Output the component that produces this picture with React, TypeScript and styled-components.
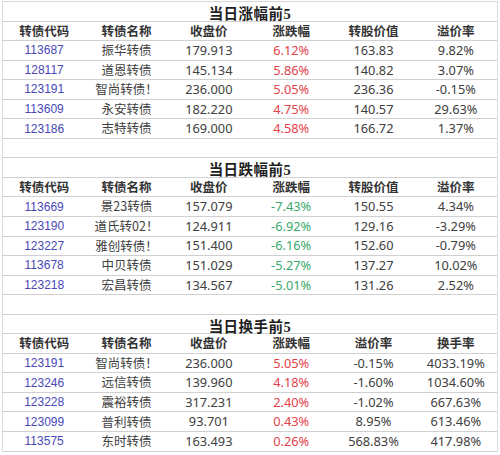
import React from 'react';
import styled, { createGlobalStyle } from 'styled-components';

const GlobalStyle = createGlobalStyle`
  html, body {
    margin: 0;
    padding: 0;
    background: #ffffff;
  }
`;

const Sheet = styled.div`
  width: 494px;
  margin: 1px 0 0 2px;
  border-top: 1px solid #d6d6d6;
  border-left: 1px solid #dcdcdc;
  border-right: 1px solid #dcdcdc;
  font-family: 'Noto Sans', 'Noto Sans CJK SC', sans-serif;
  color: #3a3a3a;
`;

const Row = styled.div`
  display: grid;
  grid-template-columns: repeat(6, 1fr);
  align-items: center;
  height: 19.55px;
  box-sizing: border-box;
  border-bottom: 1px solid #d0d0d0;
`;

const TitleRow = styled.div`
  height: 19.55px;
  box-sizing: border-box;
  border-bottom: 1px solid #d0d0d0;
  display: flex;
  align-items: center;
  justify-content: center;
  padding-top: 2px;
  font-family: 'Liberation Serif', 'Noto Sans CJK SC', serif;
  font-weight: 700;
  font-size: 14.5px;
  color: #1e1e1e;
  letter-spacing: 0.5px;
`;

const BlankRow = styled.div`
  height: 19.55px;
  box-sizing: border-box;
  border-bottom: 1px solid #d0d0d0;
`;

const HeadCell = styled.div`
  text-align: center;
  font-family: 'Noto Sans CJK SC', sans-serif;
  font-weight: 700;
  font-size: 12.5px;
  color: #333333;
  line-height: 1;
`;

type Tone = 'plain' | 'name' | 'code' | 'up' | 'down';

const toneColor: Record<Tone, string> = {
  plain: '#404040',
  name: '#404040',
  code: '#4848b8',
  up: '#e4424a',
  down: '#39a86c',
};

const toneFont: Record<Tone, string> = {
  plain: "'Noto Sans', 'Noto Sans CJK SC', sans-serif",
  name: "'Noto Sans CJK SC', sans-serif",
  code: "'Liberation Sans', sans-serif",
  up: "'Noto Sans', sans-serif",
  down: "'Noto Sans', sans-serif",
};

const Cell = styled.div<{ $tone: Tone }>`
  text-align: center;
  font-family: ${(p) => toneFont[p.$tone]};
  font-size: ${(p) => (p.$tone === 'code' ? '12px' : p.$tone === 'name' ? '12.5px' : '12.8px')};
  color: ${(p) => toneColor[p.$tone]};
  line-height: 1;
  white-space: nowrap;
`;

type Section = {
  title: string;
  headers: string[];
  tones: Tone[];
  rows: string[][];
};

const changeTone = (v: string): Tone => (v.startsWith('-') ? 'down' : 'up');

const sections: Section[] = [
  {
    title: '当日涨幅前5',
    headers: ['转债代码', '转债名称', '收盘价', '涨跌幅', '转股价值', '溢价率'],
    tones: ['code', 'name', 'plain', 'up', 'plain', 'plain'],
    rows: [
      ['113687', '振华转债', '179.913', '6.12%', '163.83', '9.82%'],
      ['128117', '道恩转债', '145.134', '5.86%', '140.82', '3.07%'],
      ['123191', '智尚转债！', '236.000', '5.05%', '236.36', '-0.15%'],
      ['113609', '永安转债', '182.220', '4.75%', '140.57', '29.63%'],
      ['123186', '志特转债', '169.000', '4.58%', '166.72', '1.37%'],
    ],
  },
  {
    title: '当日跌幅前5',
    headers: ['转债代码', '转债名称', '收盘价', '涨跌幅', '转股价值', '溢价率'],
    tones: ['code', 'name', 'plain', 'down', 'plain', 'plain'],
    rows: [
      ['113669', '景23转债', '157.079', '-7.43%', '150.55', '4.34%'],
      ['123190', '道氏转02！', '124.911', '-6.92%', '129.16', '-3.29%'],
      ['123227', '雅创转债！', '151.400', '-6.16%', '152.60', '-0.79%'],
      ['113678', '中贝转债', '151.029', '-5.27%', '137.27', '10.02%'],
      ['123218', '宏昌转债', '134.567', '-5.01%', '131.26', '2.52%'],
    ],
  },
  {
    title: '当日换手前5',
    headers: ['转债代码', '转债名称', '收盘价', '涨跌幅', '溢价率', '换手率'],
    tones: ['code', 'name', 'plain', 'up', 'plain', 'plain'],
    rows: [
      ['123191', '智尚转债！', '236.000', '5.05%', '-0.15%', '4033.19%'],
      ['123246', '远信转债', '139.960', '4.18%', '-1.60%', '1034.60%'],
      ['123228', '震裕转债', '317.231', '2.40%', '-1.02%', '667.63%'],
      ['123099', '普利转债', '93.701', '0.43%', '8.95%', '613.46%'],
      ['113575', '东时转债', '163.493', '0.26%', '568.83%', '417.98%'],
    ],
  },
];

const SectionBlock = ({ section, last }: { section: Section; last: boolean }) => (
  <>
    <TitleRow>{section.title}</TitleRow>
    <Row>
      {section.headers.map((h) => (
        <HeadCell key={h}>{h}</HeadCell>
      ))}
    </Row>
    {section.rows.map((r) => (
      <Row key={r[0]}>
        {r.map((v, i) => {
          const tone = section.tones[i];
          return (
            <Cell key={i} $tone={tone === 'up' || tone === 'down' ? changeTone(v) : tone}>
              {v}
            </Cell>
          );
        })}
      </Row>
    ))}
    {!last && <BlankRow />}
  </>
);

export default function App() {
  return (
    <>
      <GlobalStyle />
      <Sheet>
        {sections.map((s, i) => (
          <SectionBlock key={s.title} section={s} last={i === sections.length - 1} />
        ))}
      </Sheet>
    </>
  );
}
